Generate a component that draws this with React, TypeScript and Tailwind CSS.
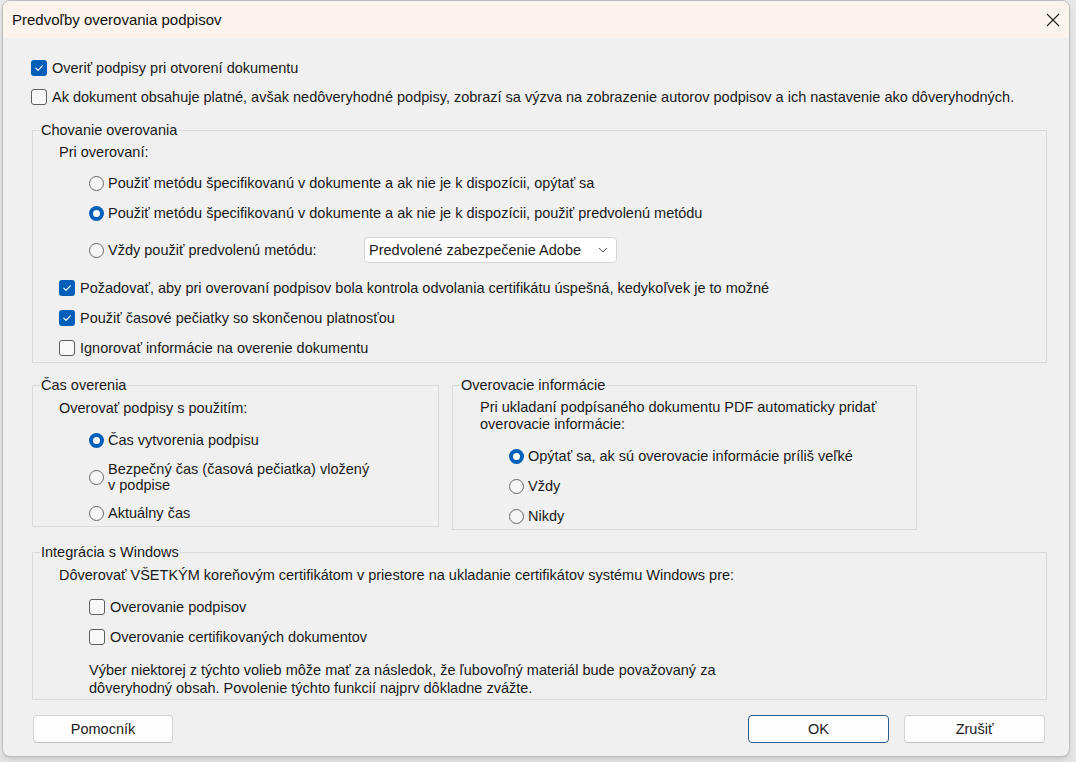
import React from 'react'

const Check = ({ checked }: { checked?: boolean }) =>
  checked ? (
    <span className="flex size-4 shrink-0 items-center justify-center rounded-[3px] bg-[#005fb8]">
      <svg viewBox="0 0 16 16" className="size-4">
        <path d="M4.8 8.2l2.2 2.2 4.3-4.6" fill="none" stroke="white" strokeWidth="1.2" strokeLinecap="round" strokeLinejoin="round" />
      </svg>
    </span>
  ) : (
    <span className="size-4 shrink-0 rounded-[3px] border border-[#5e5e5e] bg-[#f8f8f8]" />
  )

const Radio = ({ checked }: { checked?: boolean }) =>
  checked ? (
    <span className="flex size-[15px] shrink-0 items-center justify-center rounded-full bg-[#005fb8]">
      <span className="size-[7px] rounded-full bg-white" />
    </span>
  ) : (
    <span className="size-[15px] shrink-0 rounded-full border border-[#666] bg-[#f6f6f6]" />
  )

const CheckRow = ({ checked, children, className = '' }: { checked?: boolean; children: React.ReactNode; className?: string }) => (
  <div className={`flex h-5 items-center gap-[5px] ${className}`}>
    <Check checked={checked} />
    <span>{children}</span>
  </div>
)

const RadioRow = ({ checked, children, className = '' }: { checked?: boolean; children: React.ReactNode; className?: string }) => (
  <div className={`flex h-5 items-center gap-1 ${className}`}>
    <Radio checked={checked} />
    <span>{children}</span>
  </div>
)

const Group = ({ title, className = '', children }: { title: string; className?: string; children: React.ReactNode }) => (
  <fieldset className={`border border-[#dadada] ${className}`}>
    <legend className="ml-[7px] px-px leading-4">{title}</legend>
    {children}
  </fieldset>
)

const Button = ({ children, primary, wide }: { children: React.ReactNode; primary?: boolean; wide?: boolean }) => (
  <button
    className={`flex h-[28px] items-center justify-center rounded-[4px] border bg-[#fdfdfd] ${wide ? 'w-[141px]' : 'w-[140px]'} ${
      primary ? 'border-[#2a5c8c]' : 'border-[#d3d3d3] border-b-[#c2c2c2]'
    }`}
  >
    {children}
  </button>
)

export default function App() {
  return (
    <div className="h-[762px] w-[1076px] overflow-hidden bg-[#e6e6e6] font-['Liberation_Sans',Arial,sans-serif] text-[14.5px] leading-4 text-[#1a1a1a]">
      <div className="ml-[2px] h-[757px] w-[1068px] overflow-hidden rounded-lg border border-[#bcbcbc] bg-[#f0f0f0] shadow-md">
        {/* title bar */}
        <div className="flex h-[37px] items-center justify-between bg-[#fbf4ec] pl-[9px] pr-[9px]">
          <span className="text-[15px] text-[#111]">Predvoľby overovania podpisov</span>
          <svg viewBox="0 0 14 14" className="size-[14px]">
            <path d="M1 1l12 12M13 1L1 13" stroke="#222" strokeWidth="1.1" />
          </svg>
        </div>

        <div className="pl-[28px] pt-[20px]">
          <CheckRow checked>Overiť podpisy pri otvorení dokumentu</CheckRow>
          <CheckRow className="mt-[9px]">
            Ak dokument obsahuje platné, avšak nedôveryhodné podpisy, zobrazí sa výzva na zobrazenie autorov podpisov a ich nastavenie ako dôveryhodných.
          </CheckRow>

          <Group title="Chovanie overovania" className="ml-px mt-[15px] w-[1015px]">
            <div className="pb-[4px] pl-[26px] pt-[4px]">
              <div className="flex h-5 items-center">Pri overovaní:</div>
              <div className="pl-[30px]">
                <RadioRow className="mt-[11px]">Použiť metódu špecifikovanú v dokumente a ak nie je k dispozícii, opýtať sa</RadioRow>
                <RadioRow checked className="mt-[10px]">
                  Použiť metódu špecifikovanú v dokumente a ak nie je k dispozícii, použiť predvolenú metódu
                </RadioRow>
                <div className="mt-[14px] flex h-[26px] items-center">
                  <div className="flex w-[275px] items-center gap-1">
                    <Radio />
                    <span>Vždy použiť predvolenú metódu:</span>
                  </div>
                  <div className="flex h-[26px] w-[253px] items-center justify-between rounded-[4px] border border-[#d5d5d5] bg-white pl-[4px] pr-[8px]">
                    <span>Predvolené zabezpečenie Adobe</span>
                    <svg viewBox="0 0 10 6" className="h-[6px] w-[10px]">
                      <path d="M1 1l4 4 4-4" fill="none" stroke="#555" strokeWidth="1" />
                    </svg>
                  </div>
                </div>
              </div>
              <CheckRow checked className="mt-[15px]">
                Požadovať, aby pri overovaní podpisov bola kontrola odvolania certifikátu úspešná, kedykoľvek je to možné
              </CheckRow>
              <CheckRow checked className="mt-[10px]">Použiť časové pečiatky so skončenou platnosťou</CheckRow>
              <CheckRow className="mt-[10px]">Ignorovať informácie na overenie dokumentu</CheckRow>
            </div>
          </Group>

          <div className="ml-px mt-[14px] flex items-start gap-[13px]">
            <Group title="Čas overenia" className="w-[407px]">
              <div className="pb-[3px] pl-[26px] pt-[5px]">
                <div className="flex h-5 items-center">Overovať podpisy s použitím:</div>
                <div className="pl-[30px]">
                  <RadioRow checked className="mt-[12px]">Čas vytvorenia podpisu</RadioRow>
                  <div className="mt-[11px] flex items-center gap-1">
                    <Radio />
                    <span>
                      Bezpečný čas (časová pečiatka) vložený
                      <br />v podpise
                    </span>
                  </div>
                  <RadioRow className="mt-[10px]">Aktuálny čas</RadioRow>
                </div>
              </div>
            </Group>

            <Group title="Overovacie informácie" className="w-[465px]">
              <div className="pb-[3px] pl-[27px] pt-[6px]">
                <div className="leading-[17px]">
                  Pri ukladaní podpísaného dokumentu PDF automaticky pridať
                  <br />
                  overovacie informácie:
                </div>
                <div className="pl-[29px]">
                  <RadioRow checked className="mt-[13px]">Opýtať sa, ak sú overovacie informácie príliš veľké</RadioRow>
                  <RadioRow className="mt-[10px]">Vždy</RadioRow>
                  <RadioRow className="mt-[10px]">Nikdy</RadioRow>
                </div>
              </div>
            </Group>
          </div>

          <Group title="Integrácia s Windows" className="ml-px mt-[14px] w-[1015px]">
            <div className="pb-[2px] pl-[26px] pt-[5px]">
              <div className="flex h-5 items-center">
                Dôverovať VŠETKÝM koreňovým certifikátom v priestore na ukladanie certifikátov systému Windows pre:
              </div>
              <div className="pl-[30px]">
                <CheckRow className="mt-[12px] gap-[3px]">Overovanie podpisov</CheckRow>
                <CheckRow className="mt-[10px] gap-[3px]">Overovanie certifikovaných dokumentov</CheckRow>
                <div className="mt-[14px] leading-[18px]">
                  Výber niektorej z týchto volieb môže mať za následok, že ľubovoľný materiál bude považovaný za
                  <br />
                  dôveryhodný obsah. Povolenie týchto funkcií najprv dôkladne zvážte.
                </div>
              </div>
            </div>
          </Group>

          <div className="ml-[2px] mt-[15px] flex w-[1012px] items-center">
            <Button>Pomocník</Button>
            <div className="flex-1" />
            <Button primary wide>OK</Button>
            <div className="w-[15px]" />
            <Button wide>Zrušiť</Button>
          </div>
        </div>
      </div>
    </div>
  )
}
